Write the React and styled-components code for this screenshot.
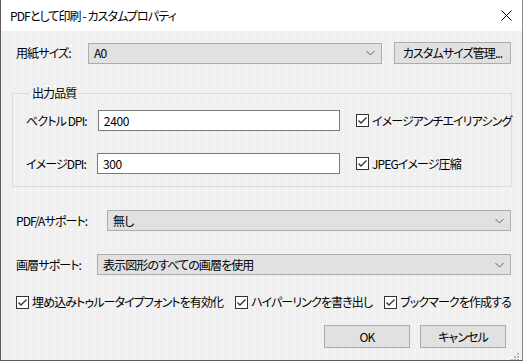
import React from "react";
import styled, { createGlobalStyle } from "styled-components";

const Global = createGlobalStyle`
  html, body { margin: 0; padding: 0; background: #ffffff; }
  body {
    font-family: "Noto Sans CJK JP", "Noto Sans", sans-serif;
    font-size: 12px;
    color: #000;
    font-feature-settings: "palt";
    letter-spacing: -0.9px;
  }
  * { box-sizing: border-box; }
`;

const Window = styled.div`
  width: 523px;
  height: 361px;
  display: flex;
  flex-direction: column;
  border-left: 1px solid #5b5b5b;
  border-right: 1px solid #8a8a8a;
  border-bottom: 1px solid #5b5b5b;
  background: #f0f0f0;
  position: relative;
  overflow: hidden;
`;

const TitleBar = styled.div`
  height: 31px;
  flex: none;
  background: #ffffff;
  display: flex;
  align-items: center;
  justify-content: space-between;
  padding: 0 9px 0 9px;
  font-size: 12px;
  line-height: 14px;
`;

const CloseButton = styled.div`
  width: 14px;
  height: 14px;
  display: flex;
  align-items: center;
  justify-content: center;
`;

const Body = styled.div`
  flex: 1;
  display: flex;
  flex-direction: column;
  padding: 11px 11px 0 15px;
  background-color: #f0f0f0;
  background-image: radial-gradient(circle, rgba(255, 255, 255, 0.6) 0.7px, transparent 1px);
  background-size: 8px 8px;
  background-position: 2px 3px;
`;

const Row = styled.div`
  display: flex;
  align-items: center;
  margin-top: ${(p) => p.$mt || 0}px;
`;

const Label = styled.span`
  flex: none;
  width: ${(p) => (p.$w ? `${p.$w}px` : "auto")};
  margin-right: ${(p) => p.$gap || 0}px;
  white-space: nowrap;
  line-height: 14px;
`;

const Combo = styled.div`
  flex: 1;
  height: 21px;
  border: 1px solid #adadad;
  background: #e1e1e1;
  display: flex;
  align-items: center;
  justify-content: space-between;
  padding: 0 6px 0 5px;
  line-height: 14px;
`;

const Button = styled.div`
  width: ${(p) => p.$w}px;
  height: ${(p) => p.$h || 21}px;
  margin-left: ${(p) => p.$ml || 0}px;
  flex: none;
  border: 1px solid #adadad;
  background: #e1e1e1;
  display: flex;
  align-items: center;
  justify-content: center;
  line-height: 14px;
  white-space: nowrap;
`;

const Group = styled.fieldset`
  margin: 22px 0 0 -4px;
  width: 500px;
  border: 1px solid #dcdcdc;
  padding: 10px 10px 12px 13px;
  min-width: 0;
`;

const Legend = styled.legend`
  padding: 0 2px;
  margin-left: 4px;
  line-height: 14px;
  font-size: 12px;
`;

const GroupRow = styled.div`
  display: flex;
  align-items: center;
  margin-top: ${(p) => p.$mt || 0}px;
`;

const TextInput = styled.input`
  flex: 1;
  min-width: 0;
  height: 21px;
  border: 1px solid #7a7a7a;
  background: #ffffff;
  padding: 0 5px;
  font: inherit;
  font-size: 12px;
  letter-spacing: -0.3px;
  color: #000;
  outline: none;
`;

const CheckWrap = styled.label`
  display: flex;
  align-items: center;
  flex: none;
  width: ${(p) => (p.$w ? `${p.$w}px` : "auto")};
  margin-left: ${(p) => p.$ml || 0}px;
  white-space: nowrap;
  line-height: 14px;
`;

const Box = styled.span`
  width: 13px;
  height: 13px;
  flex: none;
  border: 1px solid #333333;
  background: #ffffff;
  display: flex;
  align-items: center;
  justify-content: center;
  margin-right: 3px;
`;

const CheckRow = styled.div`
  display: flex;
  align-items: center;
  justify-content: space-between;
  margin-top: 20px;
`;

const ButtonRow = styled.div`
  display: flex;
  justify-content: flex-end;
  margin-top: 16px;
  padding-right: 5px;
`;

const Grip = styled.div`
  position: absolute;
  right: 2px;
  bottom: 2px;
  width: 10px;
  height: 10px;
`;

const Chevron = () => (
  <svg width="9" height="6" viewBox="0 0 9 6">
    <path d="M0.5 1 L4.5 5 L8.5 1" fill="none" stroke="#606060" strokeWidth="1" />
  </svg>
);

const Check = ({ label, w, ml }) => (
  <CheckWrap $w={w} $ml={ml}>
    <Box>
      <svg width="11" height="11" viewBox="0 0 11 11">
        <path d="M1.5 5.5 L4 8 L9.5 2.5" fill="none" stroke="#333333" strokeWidth="1.4" />
      </svg>
    </Box>
    <span>{label}</span>
  </CheckWrap>
);

export default function App() {
  return (
    <>
      <Global />
      <Window>
        <TitleBar>
          <span>PDFとして印刷 - カスタムプロパティ</span>
          <CloseButton>
            <svg width="11" height="11" viewBox="0 0 11 11">
              <path d="M0.5 0.5 L10.5 10.5 M10.5 0.5 L0.5 10.5" stroke="#000" strokeWidth="1" />
            </svg>
          </CloseButton>
        </TitleBar>
        <Body>
          <Row>
            <Label $w={72}>用紙サイズ:</Label>
            <Combo>
              <span>A0</span>
              <Chevron />
            </Combo>
            <Button $w={117} $h={22} $ml={12}>カスタムサイズ管理...</Button>
          </Row>

          <Group>
            <Legend>出力品質</Legend>
            <GroupRow>
              <Label $gap={11}>ベクトル DPI:</Label>
              <TextInput defaultValue="2400" />
              <Check label="イメージアンチエイリアシング" w={145} ml={16} />
            </GroupRow>
            <GroupRow $mt={22}>
              <Label $gap={11}>イメージDPI:</Label>
              <TextInput defaultValue="300" />
              <Check label="JPEGイメージ圧縮" w={145} ml={16} />
            </GroupRow>
          </Group>

          <Row $mt={23}>
            <Label $w={91}>PDF/Aサポート:</Label>
            <Combo>
              <span>無し</span>
              <Chevron />
            </Combo>
          </Row>

          <Row $mt={23}>
            <Label $w={81}>画層サポート:</Label>
            <Combo>
              <span>表示図形のすべての画層を使用</span>
              <Chevron />
            </Combo>
          </Row>

          <CheckRow>
            <Check label="埋め込みトゥルータイプフォントを有効化" />
            <Check label="ハイパーリンクを書き出し" />
            <Check label="ブックマークを作成する" />
          </CheckRow>

          <ButtonRow>
            <Button $w={86} $h={23}>OK</Button>
            <Button $w={86} $h={23} $ml={10}>キャンセル</Button>
          </ButtonRow>
        </Body>
        <Grip>
          <svg width="10" height="10" viewBox="0 0 10 10">
            <rect x="7" y="1" width="2" height="2" fill="#b8b8b8" />
            <rect x="4" y="4" width="2" height="2" fill="#b8b8b8" />
            <rect x="7" y="4" width="2" height="2" fill="#b8b8b8" />
            <rect x="1" y="7" width="2" height="2" fill="#b8b8b8" />
            <rect x="4" y="7" width="2" height="2" fill="#b8b8b8" />
            <rect x="7" y="7" width="2" height="2" fill="#b8b8b8" />
          </svg>
        </Grip>
      </Window>
    </>
  );
}
